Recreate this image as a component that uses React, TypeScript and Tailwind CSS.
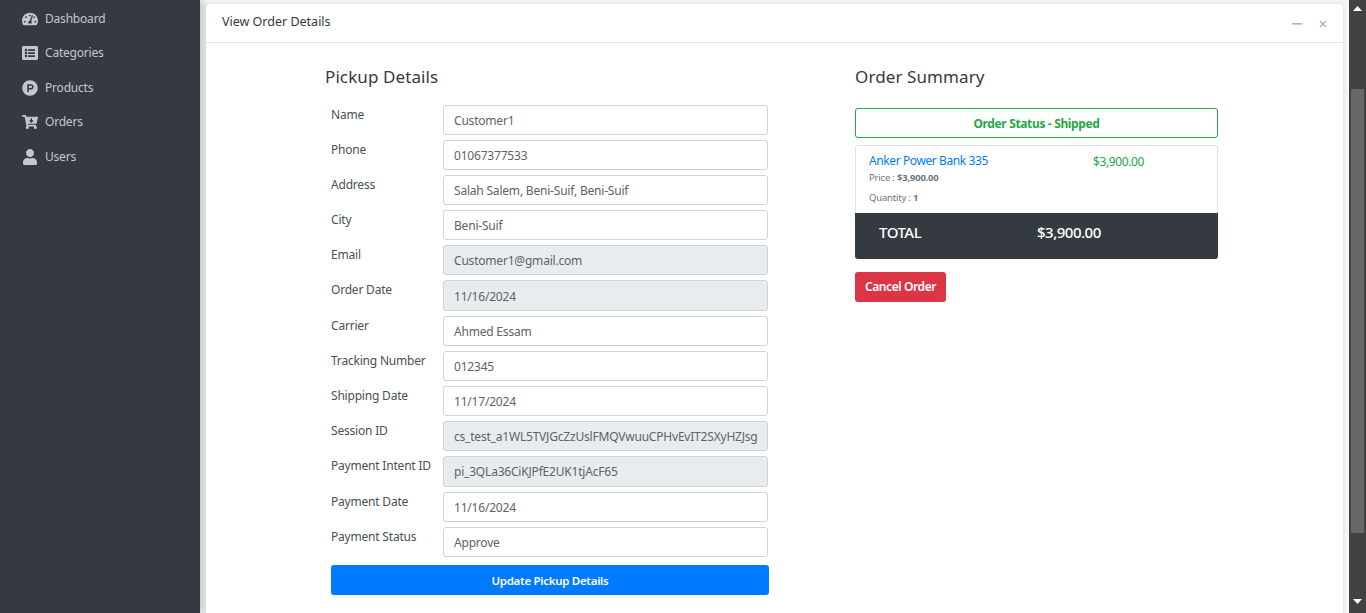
import { FaTachometerAlt, FaListAlt, FaProductHunt, FaCartArrowDown, FaUser } from "react-icons/fa";

const nav = [
  { icon: FaTachometerAlt, label: "Dashboard" },
  { icon: FaListAlt, label: "Categories" },
  { icon: FaProductHunt, label: "Products" },
  { icon: FaCartArrowDown, label: "Orders" },
  { icon: FaUser, label: "Users" },
];

const fields: [string, string, boolean][] = [
  ["Name", "Customer1", false],
  ["Phone", "01067377533", false],
  ["Address", "Salah Salem, Beni-Suif, Beni-Suif", false],
  ["City", "Beni-Suif", false],
  ["Email", "Customer1@gmail.com", true],
  ["Order Date", "11/16/2024", true],
  ["Carrier", "Ahmed Essam", false],
  ["Tracking Number", "012345", false],
  ["Shipping Date", "11/17/2024", false],
  ["Session ID", "cs_test_a1WL5TVJGcZzUslFMQVwuuCPHvEvIT2SXyHZJsg", true],
  ["Payment Intent ID", "pi_3QLa36CiKJPfE2UK1tjAcF65", true],
  ["Payment Date", "11/16/2024", false],
  ["Payment Status", "Approve", false],
];

export default function App() {
  return (
    <div className="flex h-[613px] w-[1366px] overflow-hidden bg-[#f4f6f9] font-['Noto_Sans',sans-serif] text-[12px] tracking-[-0.2px] text-[#212529]">
      <aside className="flex w-[200px] shrink-0 flex-col gap-[14.5px] bg-[#343a40] pl-[22px] pt-[8.75px] text-[#c2c7d0] shadow-[2px_0_8px_rgba(0,0,0,0.25)]">
        {nav.map(({ icon: Icon, label }) => (
          <div key={label} className="flex h-[20px] items-center">
            <span className="flex w-[23px] shrink-0 items-center"><Icon size={16} /></span>
            <span>{label}</span>
          </div>
        ))}
      </aside>
      <main className="min-w-0 flex-1 pl-[6px] pr-[6px] pt-[4px]">
        <div className="h-[700px] rounded-t-[4px] bg-white shadow-[0_0_4px_rgba(0,0,0,0.15)]">
          <header className="flex h-[39px] items-center justify-between border-b border-[#dee2e6] pl-[16px] pr-[16px]">
            <span className="pb-[1px] text-[12.5px] tracking-normal text-[#343a40]">View Order Details</span>
            <div className="flex items-center gap-[17px] pt-[2px] text-[#adb5bd]">
              <svg width="10" height="10" viewBox="0 0 10 10"><rect y="4" width="10" height="1.6" fill="currentColor" /></svg>
              <svg width="8" height="8" viewBox="0 0 8 8"><path d="M1 1l6 6M7 1L1 7" stroke="currentColor" strokeWidth="1.6" /></svg>
            </div>
          </header>
          <div className="flex pl-[119px] pt-[22px]">
            <section className="w-[444px] shrink-0">
              <h2 className="mb-[15.5px] h-[24px] text-[17px] leading-[24px] tracking-[0.1px] text-[#343a40]">Pickup Details</h2>
              <div className="pl-[6px]">
                {fields.map(([label, value, disabled]) => (
                  <div key={label} className="mb-[5px] flex h-[30.2px]">
                    <label className="w-[112px] shrink-0 leading-[20px] text-[#495057]">{label}</label>
                    <div className={`flex h-full w-[325px] items-center overflow-hidden whitespace-nowrap rounded-[3px] border border-[#ced4da] px-[10px] pt-[2px] text-[#5c636a] ${disabled ? "bg-[#e9ecef]" : "bg-white"}`}>{value}</div>
                  </div>
                ))}
                <button className="mt-[3px] h-[30px] w-[438px] rounded-[3px] bg-[#007bff] pt-[2px] text-[11.5px] font-semibold tracking-[-0.3px] text-white">Update Pickup Details</button>
              </div>
            </section>
            <section className="ml-[86px] w-[363px] shrink-0">
              <h2 className="mb-[19px] h-[24px] text-[17px] leading-[24px] tracking-[0.1px] text-[#343a40]">Order Summary</h2>
              <div className="flex h-[30px] items-center justify-center rounded-[3px] border border-[#28a745] pt-[2px] font-bold tracking-[-0.35px] text-[#28a745]">Order Status - Shipped</div>
              <div className="mt-[7px] h-[68px] rounded-t-[3px] border border-b-0 border-[#dee2e6] pl-[13px] pt-[6px]">
                <div className="flex">
                  <div className="w-[224px] shrink-0">
                    <div className="tracking-[-0.4px] text-[#007bff]">Anker Power Bank 335</div>
                    <div className="mt-[1px] text-[9.5px] text-[#6c757d]">Price : <b>$3,900.00</b></div>
                    <div className="mt-[6px] text-[9.5px] text-[#6c757d]">Quantity : <b>1</b></div>
                  </div>
                  <div className="pt-[1px] tracking-[-0.4px] text-[#28a745]">$3,900.00</div>
                </div>
              </div>
              <div className="flex h-[46px] rounded-b-[3px] bg-[#343a40] pl-[24px] pt-[8px] text-[15px] font-medium tracking-[-0.5px] text-white">
                <span className="w-[158px]">TOTAL</span>
                <span>$3,900.00</span>
              </div>
              <button className="mt-[13px] h-[30px] w-[91px] rounded-[3px] bg-[#dc3545] text-[12px] font-semibold tracking-[-0.4px] text-white">Cancel Order</button>
            </section>
          </div>
        </div>
      </main>
      <div className="flex w-[17px] shrink-0 flex-col items-center bg-[#424242]">
        <svg className="mt-[6px]" width="9" height="5" viewBox="0 0 9 5"><path d="M4.5 0L9 5H0z" fill="#fff" /></svg>
        <div className="mt-[78px] h-[444px] w-[13px] bg-[#686868]" />
        <svg className="mt-[66px]" width="9" height="5" viewBox="0 0 9 5"><path d="M0 0h9L4.5 5z" fill="#fff" /></svg>
      </div>
    </div>
  );
}
